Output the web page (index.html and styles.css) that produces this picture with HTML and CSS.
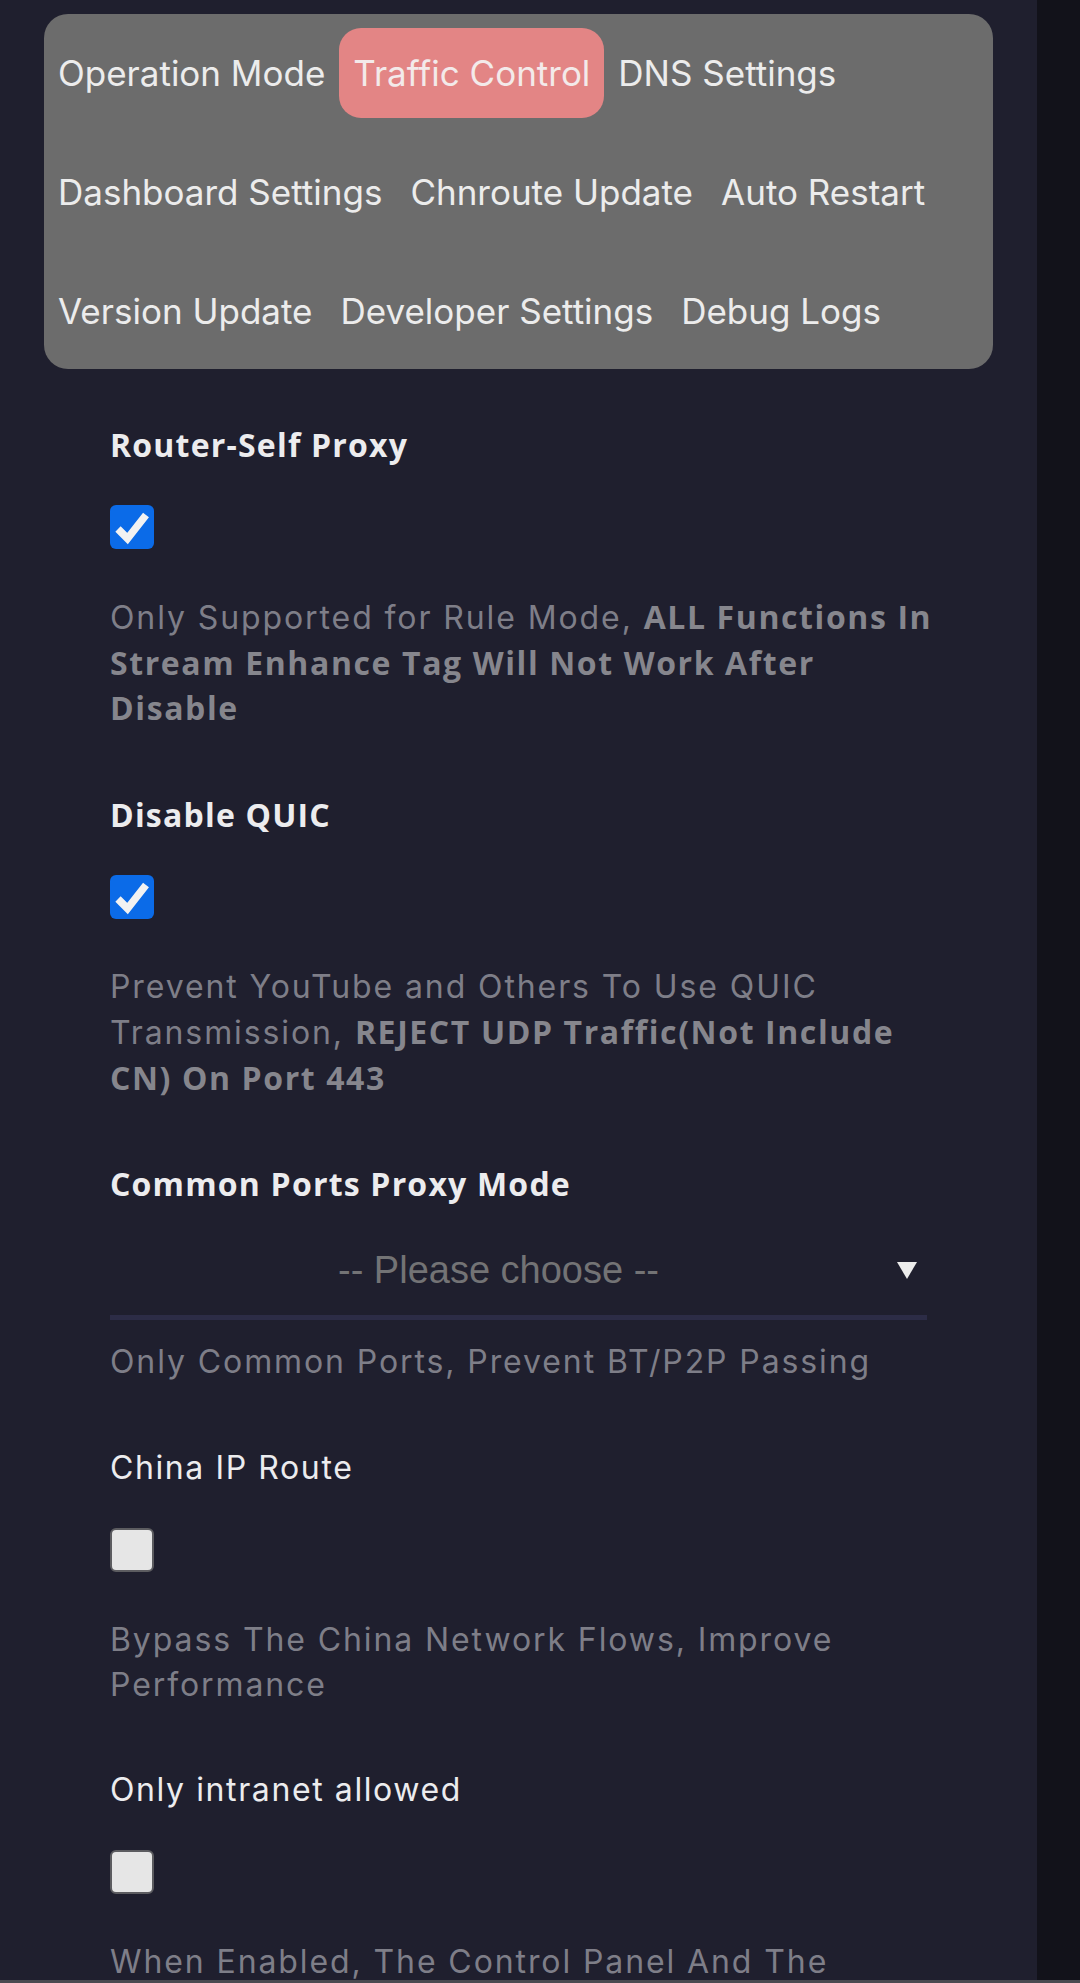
FILE: index.html
```html
<!DOCTYPE html>
<html lang="en">
<head>
<meta charset="utf-8">
<title>Traffic Control</title>
<link rel="stylesheet" href="styles.css">
</head>
<body>
<div class="page">
  <main class="main">
    <nav class="tabs">
      <span class="tab">Operation Mode</span>
      <span class="tab active">Traffic Control</span>
      <span class="tab">DNS Settings</span>
      <span class="tab">Dashboard Settings</span>
      <span class="tab">Chnroute Update</span>
      <span class="tab">Auto Restart</span>
      <span class="tab">Version Update</span>
      <span class="tab">Developer Settings</span>
      <span class="tab">Debug Logs</span>
    </nav>

    <section class="settings">
      <div class="field">
        <div class="label strong">Router-Self Proxy</div>
        <span class="check on"><svg viewBox="0 0 44 44" width="44" height="44"><path d="M8 24 L17.5 33.5 L36 10" fill="none" stroke="#f2f2f2" stroke-width="7.5" stroke-linejoin="miter"/></svg></span>
        <p class="desc">Only Supported for Rule Mode, <b>ALL Functions In<br>Stream Enhance Tag Will Not Work After<br>Disable</b></p>
      </div>

      <div class="field">
        <div class="label strong">Disable QUIC</div>
        <span class="check on"><svg viewBox="0 0 44 44" width="44" height="44"><path d="M8 24 L17.5 33.5 L36 10" fill="none" stroke="#f2f2f2" stroke-width="7.5" stroke-linejoin="miter"/></svg></span>
        <p class="desc">Prevent YouTube and Others To Use QUIC<br>Transmission, <b>REJECT UDP Traffic(Not Include<br>CN) On Port 443</b></p>
      </div>

      <div class="field">
        <div class="label strong">Common Ports Proxy Mode</div>
        <div class="select">
          <span class="select-value">-- Please choose --</span>
          <svg class="select-arrow" viewBox="0 0 20 17" width="20" height="17"><polygon points="0,0 20,0 10,17" fill="#ececec"/></svg>
        </div>
        <p class="desc tight">Only Common Ports, Prevent BT/P2P Passing</p>
      </div>

      <div class="field">
        <div class="label">China IP Route</div>
        <span class="check off"></span>
        <p class="desc">Bypass The China Network Flows, Improve Performance</p>
      </div>

      <div class="field">
        <div class="label">Only intranet allowed</div>
        <span class="check off"></span>
        <p class="desc">When Enabled, The Control Panel And The Connection Port Will Only Be Accessible On The LAN</p>
      </div>
    </section>
  </main>
  <aside class="side"></aside>
</div>
<div class="hbar"></div>
</body>
</html>
```

FILE: styles.css
```css
html, body {
  margin: 0;
  padding: 0;
}

body {
  background: #1f1f2e;
  font-family: Inter, "Noto Sans", sans-serif;
  color: #ebebeb;
  overflow: hidden;
}

.page {
  display: flex;
  min-height: 1983px;
}

.main {
  width: 1037px;
  flex: none;
  padding-top: 14px;
}

.side {
  flex: 1;
  background: #12121a;
}

.tabs {
  margin: 0 44px;
  background: #6c6c6c;
  border-radius: 24px;
  padding: 14px 0 13px;
  display: flex;
  flex-wrap: wrap;
  row-gap: 29px;
}

.tab {
  height: 90px;
  line-height: 90px;
  padding: 0 14px;
  font-size: 35px;
  color: #ececec;
  border-radius: 22px;
  white-space: nowrap;
}

.tab.active {
  background: #e38585;
  color: #f3eaea;
}

.settings {
  padding: 54px 110px 0 110px;
}

.field {
  margin-bottom: 61px;
}

.label {
  font-size: 32px;
  line-height: 44.8px;
  letter-spacing: 1.6px;
  color: #ececee;
}

.label.strong {
  font-family: "Open Sans", Lato, sans-serif;
  font-weight: 700;
  letter-spacing: 1.2px;
}

.check {
  display: block;
  width: 44px;
  height: 44px;
  margin-top: 37px;
  box-sizing: border-box;
  border-radius: 6px;
}

.check svg {
  display: block;
}

.check.on {
  background: #0b6be8;
}

.check.off {
  background: #e6e6e6;
  border: 2px solid #5c5c60;
}

.desc {
  margin: 46px -40px 0 0;
  font-size: 32px;
  line-height: 44.8px;
  letter-spacing: 1.9px;
  color: #7e7e88;
}

.desc b {
  font-family: "Open Sans", Lato, sans-serif;
  font-weight: 700;
  letter-spacing: 1.6px;
  color: #86868d;
}

.desc.tight {
  margin-top: 20px;
}

.select {
  margin-top: 18px;
  height: 90px;
  border-bottom: 5px solid #2c2c46;
  display: flex;
  align-items: center;
  padding-right: 10px;
}

.select-value {
  flex: 1;
  text-align: center;
  font-family: "Liberation Sans", Arial, sans-serif;
  font-size: 38px;
  color: #737375;
}

.select-arrow {
  flex: none;
  margin-left: 10px;
}

.hbar {
  position: fixed;
  left: 0;
  right: 0;
  bottom: 0;
  height: 3px;
  background: #4a4a50;
}
```
